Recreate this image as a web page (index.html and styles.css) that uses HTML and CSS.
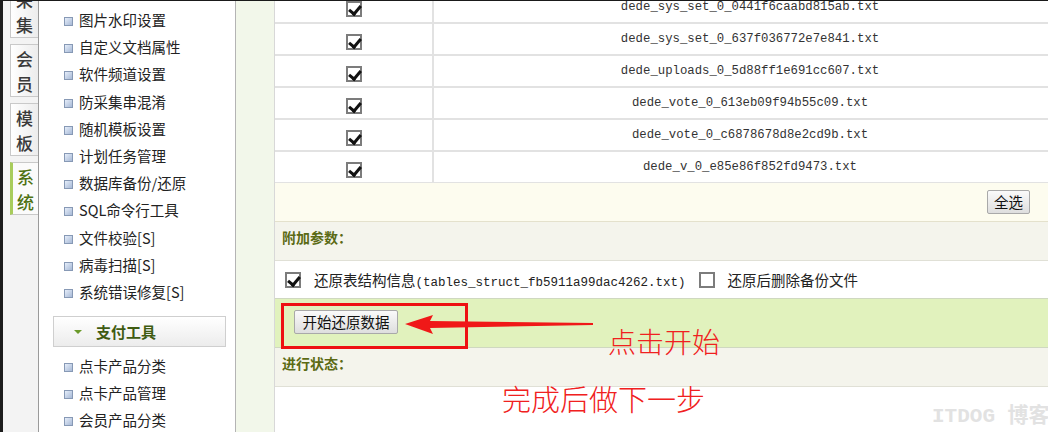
FILE: index.html
```html
<!DOCTYPE html>
<html lang="zh-CN">
  <head>
    <meta charset="UTF-8" />
    <title>数据还原</title>
    <link rel="stylesheet" href="styles.css">
  </head>
  <body>
    <div class="layout">
      <!-- left vertical tabs -->
      <div class="tabs">
        <div class="tab">采<br>集</div>
        <div class="tab">会<br>员</div>
        <div class="tab">模<br>板</div>
        <div class="tab active">系<br>统</div>
      </div>

      <!-- side menu -->
      <div class="menu">
        <ul class="menu-list">
          <li>图片水印设置</li>
          <li>自定义文档属性</li>
          <li>软件频道设置</li>
          <li>防采集串混淆</li>
          <li>随机模板设置</li>
          <li>计划任务管理</li>
          <li>数据库备份/还原</li>
          <li>SQL命令行工具</li>
          <li>文件校验[S]</li>
          <li>病毒扫描[S]</li>
          <li>系统错误修复[S]</li>
        </ul>
        <div class="menu-head"><span class="caret"></span>支付工具</div>
        <ul class="menu-list menu-list-2">
          <li>点卡产品分类</li>
          <li>点卡产品管理</li>
          <li>会员产品分类</li>
        </ul>
      </div>

      <!-- main content -->
      <div class="main">
        <div class="panel">
          <table class="files">
            <tr><td class="sel"><span class="cb on"></span></td><td class="name">dede_sys_set_0_0441f6caabd815ab.txt</td></tr>
            <tr><td class="sel"><span class="cb on"></span></td><td class="name">dede_sys_set_0_637f036772e7e841.txt</td></tr>
            <tr><td class="sel"><span class="cb on"></span></td><td class="name">dede_uploads_0_5d88ff1e691cc607.txt</td></tr>
            <tr><td class="sel"><span class="cb on"></span></td><td class="name">dede_vote_0_613eb09f94b55c09.txt</td></tr>
            <tr><td class="sel"><span class="cb on"></span></td><td class="name">dede_vote_0_c6878678d8e2cd9b.txt</td></tr>
            <tr><td class="sel"><span class="cb on"></span></td><td class="name">dede_v_0_e85e86f852fd9473.txt</td></tr>
          </table>
          <div class="row select-row"><button class="btn">全选</button></div>
          <div class="row label-row">附加参数：</div>
          <div class="row opt-row">
            <span class="cb on"></span>
            <span class="opt-text">还原表结构信息<span class="mono">(tables_struct_fb5911a99dac4262.txt)</span></span>
            <span class="cb"></span>
            <span class="opt-text">还原后删除备份文件</span>
          </div>
          <div class="row go-row"><button class="btn btn-go">开始还原数据</button></div>
          <div class="row label-row">进行状态：</div>
          <div class="row status-row"></div>
        </div>
      </div>
    </div>

    <!-- annotations drawn over the screenshot -->
    <div class="mark-box"></div>
    <svg class="mark-arrow" width="200" height="24" viewBox="0 0 200 24">
      <polygon points="2,11 30,2 27,8 190,10 190,12 27,15 30,21" fill="#f01818" />
    </svg>
    <div class="note note-start">点击开始</div>
    <div class="note note-next">完成后做下一步</div>
    <div class="watermark">ITDOG 博客</div>
  </body>
</html>
```

FILE: styles.css
```css
/* basic styling */
* {
  margin: 0;
  padding: 0;
  box-sizing: border-box;
}
body {
  width: 1048px;
  height: 432px;
  overflow: hidden;
  position: relative;
  border-top: 1px solid #1a1a1a;
  font-family: "Noto Sans CJK SC", sans-serif;
  font-size: 14.5px;
  color: #222222;
  background: #ffffff;
}

.layout {
  display: flex;
  height: 431px;
  overflow: hidden;
  border-left: 3px solid #1c1c1c;
}

/* left vertical tabs */
.tabs {
  width: 35px;
  flex: none;
  background: #f3f3f3;
  padding-left: 7px;
  display: flex;
  flex-direction: column;
  gap: 6px;
  margin-top: -16px;
}
.tab {
  height: 53px;
  flex: none;
  border: 1px solid #c9c9c9;
  border-right: none;
  background: linear-gradient(to right, #ffffff, #ececec);
  color: #3a3a3a;
  font-size: 17px;
  font-weight: 500;
  line-height: 25px;
  text-align: center;
  padding-top: 1px;
}
.tab.active {
  border-left: 3px solid #a8cc5c;
  background: #fbfbfb;
  color: #4f7212;
}

/* side menu */
.menu {
  width: 198px;
  flex: none;
  background: #ffffff;
  border-left: 1px solid #9a9a9a;
  border-right: 1px solid #b4b4b4;
}
.menu-list {
  list-style: none;
  padding-top: 5px;
}
.menu-list li {
  height: 27.2px;
  line-height: 27.2px;
  padding-left: 40px;
  position: relative;
  white-space: nowrap;
}
.menu-list li::before {
  content: "";
  position: absolute;
  left: 25px;
  top: 11px;
  width: 7px;
  height: 7px;
  border: 1px solid #8799b5;
  background: linear-gradient(135deg, #e6eefa, #a7b9d6);
}
.menu-head {
  margin: 11px 9px 0 14px;
  height: 31px;
  border: 1px solid #cfcfcf;
  background: linear-gradient(to bottom, #ffffff, #ececec);
  color: #3f5c12;
  font-size: 15px;
  font-weight: bold;
  line-height: 29px;
  padding-left: 42px;
  position: relative;
}
.caret {
  position: absolute;
  left: 20px;
  top: 13px;
  border-left: 4px solid transparent;
  border-right: 4px solid transparent;
  border-top: 4px solid #6a9a2a;
}
.menu-list-2 {
  padding-top: 5px;
}

/* main content */
.main {
  flex: none;
  width: 830px;
  background: #f2f7ea;
  padding-left: 38px;
}
.panel {
  width: 792px;
  height: 100%;
  display: flex;
  flex-direction: column;
  background: #ffffff;
  border-left: 1px solid #d8d8d8;
}

.files {
  border-collapse: collapse;
  width: 100%;
  margin-top: -10px;
}
.files td {
  height: 32px;
  border-bottom: 2px solid #e2e2e2;
  vertical-align: middle;
}
.files .sel {
  width: 158px;
  text-align: center;
  border-right: 2px solid #e2e2e2;
}
.files .name {
  text-align: center;
  font-family: "Liberation Mono", monospace;
  font-size: 12.3px;
  color: #333333;
}

/* fake checkboxes */
.cb {
  display: inline-block;
  width: 16px;
  height: 16px;
  border: 2px solid #7c7c7c;
  background: #ffffff;
  vertical-align: middle;
  position: relative;
  flex: none;
}
.cb.on::after {
  content: "";
  position: absolute;
  left: 3px;
  top: 0px;
  width: 5px;
  height: 9px;
  border-right: 3px solid #111111;
  border-bottom: 3px solid #111111;
  transform: rotate(40deg);
}

.row {
  display: flex;
  align-items: center;
  flex: none;
}
.select-row {
  height: 39px;
  background: #fdfcef;
  border-bottom: 1px solid #e4e1cc;
  justify-content: flex-end;
  padding-right: 36px;
  margin-top: -1px;
}
.label-row {
  height: 39px;
  background: #f4f4ec;
  border-bottom: 1px solid #e0e0d6;
  padding-left: 7px;
  padding-bottom: 9px;
  color: #5b6a14;
  font-weight: bold;
  font-size: 14px;
}
.opt-row {
  height: 37px;
  background: #ffffff;
  padding-left: 10px;
  gap: 13px;
}
.opt-text {
  white-space: nowrap;
}
.mono {
  font-family: "Liberation Mono", monospace;
  font-size: 12.5px;
}
.go-row {
  height: 50px;
  background: #e1f2bd;
  border-top: 1px solid #cfd8c0;
  border-bottom: 1px solid #cfd8c0;
  padding-left: 19px;
  padding-bottom: 3px;
}
.status-row {
  flex: 1;
  background: #ffffff;
}

.btn {
  font-family: "Noto Sans CJK SC", sans-serif;
  font-size: 14.5px;
  color: #111111;
  height: 24px;
  padding: 0 6px;
  border: 1px solid #a9a9a9;
  border-radius: 2px;
  background: linear-gradient(to bottom, #fafafa, #dedede);
  line-height: 22px;
}
.btn-go {
  width: 104px;
  padding: 0;
}

/* annotations */
.mark-box {
  position: absolute;
  left: 281px;
  top: 302px;
  width: 187px;
  height: 46px;
  border: 3px solid #ee1111;
}
.mark-arrow {
  position: absolute;
  left: 403px;
  top: 312px;
}
.note {
  position: absolute;
  color: #f02020;
  font-weight: 300;
  white-space: nowrap;
}
.note-start {
  left: 608px;
  top: 320px;
  font-size: 28px;
}
.note-next {
  left: 502px;
  top: 376px;
  font-size: 29px;
}
.watermark {
  position: absolute;
  left: 932px;
  top: 397px;
  font-family: "Liberation Mono", "Noto Sans CJK SC", monospace;
  font-size: 21px;
  font-weight: bold;
  color: #e2e2e2;
  white-space: nowrap;
}
```
